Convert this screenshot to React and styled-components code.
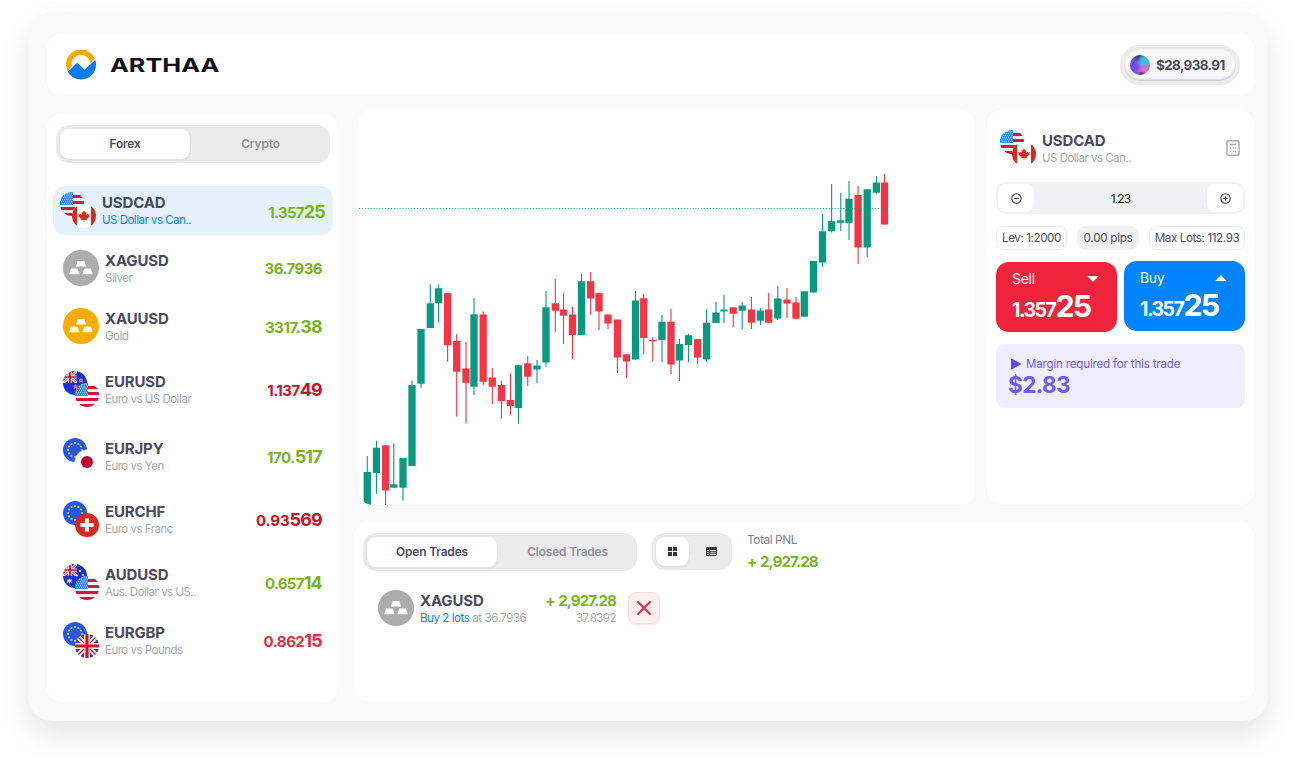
import React from "react";
import styled, { createGlobalStyle, css } from "styled-components";

const GlobalStyle = createGlobalStyle`
  *, *::before, *::after { box-sizing: border-box; }
  html, body { margin: 0; background: #fff; }
  body {
    font-family: Inter, "Liberation Sans", sans-serif;
    color: #4b4a5e;
    overflow: hidden;
  }
  button { font: inherit; color: inherit; border: 0; background: none; padding: 0; margin: 0; }
  svg { display: block; }
`;

const colors = {
  ink: "#4b4a5e",
  muted: "#a9a9ab",
  up: "#79b51c",
  down: "#cc1128",
  hot: "#ee2b43",
  blue: "#0b84f3",
  track: "#ebebeb",
};

/* ---------- layout ---------- */

const Page = styled.div`
  padding: 12px 28px 44px;
  width: 1296px;
  height: 765px;
`;

const Shell = styled.main`
  display: flex;
  flex-direction: column;
  width: 1240px;
  height: 709px;
  padding: 22px 14px 19px 19px;
  border-radius: 24px;
  background: #f9f9f9;
  box-shadow: 0 14px 30px rgba(0, 0, 0, 0.1);
`;

const Card = styled.section`
  background: #fff;
  border-radius: 15px;
`;

const Header = styled(Card).attrs({ as: "header" })`
  display: flex;
  align-items: center;
  justify-content: space-between;
  height: 61px;
  padding: 0 14px 0 19px;
`;

const Body = styled.div`
  display: flex;
  gap: 16px;
`;

const Sidebar = styled(Card).attrs({ as: "aside" })`
  width: 291px;
  height: 588px;
  margin-top: 19px;
  padding: 11px 5px 0 6px;
`;

const Main = styled.div`
  display: flex;
  flex-direction: column;
  gap: 17px;
  width: 900px;
  padding-top: 15px;
`;

const TopRow = styled.div`
  display: flex;
  gap: 12px;
  height: 395px;
  padding-left: 4px;
`;

const ChartCard = styled(Card)`
  width: 617px;
  overflow: hidden;
`;

const OrderCard = styled(Card)`
  width: 267px;
  padding: 20px 9px 0;
`;

const TradesCard = styled(Card)`
  height: 180px;
  padding: 11px 9px 0;
`;

/* ---------- header ---------- */

const Brand = styled.div`
  display: flex;
  align-items: center;
  gap: 14px;
`;

const LogoMark = styled.svg`
  width: 30px;
  height: 30px;
  margin-bottom: -1px;
  border-radius: 50%;
  transform: translateY(-0.5px);
`;

const Wordmark = styled.span`
  display: inline-block;
  font-size: 19.3px;
  line-height: 24px;
  font-weight: 700;
  color: #110e24;
  transform: scaleX(1.31);
  transform-origin: left center;
`;

const Balance = styled.div`
  display: flex;
  align-items: center;
  gap: 6px;
  width: 120px;
  height: 40px;
  padding-left: 6px;
  border: 4px solid ${colors.track};
  border-radius: 20px;
  background: #f8f8f8;
  box-shadow: inset 0 -2px 2px rgba(75, 74, 110, 0.2), inset 0 0 2px rgba(75, 74, 110, 0.12);
`;

const Orb = styled.span`
  width: 20px;
  height: 20px;
  border-radius: 50%;
  background:
    radial-gradient(circle at 60% 108%, #4a2340 0 10%, rgba(74, 35, 64, 0) 22%),
    radial-gradient(ellipse at 75% 78%, #e566d8 0 14%, rgba(229, 102, 216, 0) 38%),
    radial-gradient(circle at 74% 34%, #35c3e6 0 16%, rgba(53, 195, 230, 0) 42%),
    radial-gradient(circle at 42% 2%, #35406f 0 8%, rgba(53, 64, 111, 0) 28%),
    linear-gradient(100deg, #6b3fe6, #7d55da 50%, #4a70c8);
`;

const Amount = styled.span`
  font-size: 13.5px;
  font-weight: 700;
  letter-spacing: -0.65px;
`;

/* ---------- segmented control ---------- */

const Segments = styled.div`
  display: flex;
  width: 274px;
  height: 38px;
  margin-left: ${(p) => p.$inset || 0}px;
  padding: 4px;
  border-radius: 13px;
  background: ${colors.track};
`;

const raised = css`
  background: #fff;
  box-shadow: 0 1px 3px rgba(0, 0, 0, 0.08);
`;

const Segment = styled.button`
  flex: ${(p) => (p.$active ? "none" : 1)};
  width: 130px;
  height: 30px;
  padding-left: ${(p) => (p.$active ? 0 : 5)}px;
  border-radius: 9px;
  font-size: 11.8px;
  font-weight: 600;
  letter-spacing: -0.1px;
  color: ${(p) => (p.$active ? colors.ink : "#908f9a")};
  ${(p) => p.$active && raised}
`;

/* ---------- instruments ---------- */

const List = styled.ul`
  list-style: none;
  margin: 23px 0 0;
  padding: 0;
`;

const Row = styled.li`
  display: flex;
  align-items: center;
  height: 49px;
  margin-top: ${(p) => p.$gap}px;
  padding: ${(p) => (p.$active ? "0 8px 1px 7px" : "0 11px 1px 10px")};
  border-radius: 12px;
  background: ${(p) => (p.$active ? "#e5f1fe" : "transparent")};
`;

const Names = styled.div`
  flex: 1;
  padding: ${(p) => (p.$low ? 2 : 1)}px 0 0 6px;
  white-space: nowrap;
`;

const Symbol = styled.div`
  font-size: 15px;
  line-height: 18px;
  font-weight: 650;
  letter-spacing: -0.15px;
`;

const Caption = styled.div`
  font-size: 11.5px;
  line-height: 16px;
  letter-spacing: ${(p) => p.$tracking ?? -0.5}px;
  color: ${(p) => p.$color || colors.muted};
`;

const Price = styled.div`
  padding-top: ${(p) => p.$drop ?? 3}px;
  font-size: 15px;
  font-weight: 700;
  line-height: 22px;
  white-space: nowrap;
  letter-spacing: ${(p) => p.$tracking}px;
  color: ${(p) => p.$color};
  b { font-size: 18px; font-weight: 700; letter-spacing: -0.8px; }
`;

const PairBox = styled.div`
  display: grid;
  grid-template: 12px 12px 12px / 12px 12px 12px;
  width: 36px;
  height: 36px;
  flex: none;
`;

const FlagDisc = styled.svg`
  width: 24px;
  height: 24px;
  border-radius: 50%;
  grid-area: ${(p) => (p.$front ? "2 / 2 / 4 / 4" : "1 / 1 / 3 / 3")};
  ${(p) => p.$ring && css`box-shadow: 0 0 0 0.5px #eeeee4;`}
`;

const Union = () => (
  <>
    <path fill="#f4f4f4" d="M0 0h24v24H0z" />
    <path fill="#1d3fc4" d="M0 3.5V9h5.5zM3.5 0H9v5.5zM24 3.5V9h-5.5zM20.500 0H15v5.5zM0 20.500V15h5.500zM3.500 24H9v-5.500zM24 20.500V15h-5.500zM20.500 24H15v-5.500z" />
    <path stroke="#d80027" strokeWidth="1.3" d="M2 2l7 7M22 2l-7 7M2 22l7-7M22 22l-7-7" />
    <path fill="#ce1126" d="M10.400 0h3.200v10.400H24v3.200H13.600V24h-3.200V13.600H0v-3.200h10.400z" />
  </>
);

const flagArt = {
  us: (
    <>
      <path fill="#f6f3f5" d="M0 0h24v24H0z" />
      <path fill="#d8123f" d="M0 3h24v3H0zM0 9h24v3H0zM0 15h24v3H0zM0 21h24v3H0z" />
      <path fill="#3a8eec" d="M0 0h13v13H0z" />
      <path stroke="#9fcdfa" strokeWidth="0.9" strokeDasharray="1 1" d="M1 1.500h12M2 3.500h11M1 5.500h12M2 7.500h11M1 9.500h12M2 11.500h11" />
    </>
  ),
  ca: (
    <>
      <path fill="#fff" d="M0 0h24v24H0z" />
      <path fill="#d52b1e" d="M0 0h5v24H0zM19 0h5v24h-5z" />
      <path fill="#d52b1e" d="M12 6.200l1.200 2.300 1.300-.6-.5 3 1.500-1.300.4.9 1.700-.3-.7 1.800.8.500-3 2.600.2 1.100-2.600-.4V18h-.6v-2.200l-2.600.4.2-1.100-3-2.600.8-.500-.7-1.800 1.700.3.400-.9 1.500 1.300-.5-3 1.300.6z" />
    </>
  ),
  eu: (
    <>
      <path fill="#2358e8" d="M0 0h24v24H0z" />
      {Array.from({ length: 12 }, (_, i) => {
        const a = (i * Math.PI) / 6;
        return (
          <rect key={i} fill="#ffda1a" width="1.7" height="1.7"
            x={11.15 + 6.9 * Math.sin(a)} y={11.15 - 6.9 * Math.cos(a)} />
        );
      })}
    </>
  ),
  jp: (
    <>
      <path fill="#fff" d="M0 0h24v24H0z" />
      <circle fill="#bc002d" cx="12" cy="12" r="6" />
    </>
  ),
  ch: (
    <>
      <path fill="#d52b1e" d="M0 0h24v24H0z" />
      <path fill="#fff" d="M9.900 5.400h4.200v4.500h4.500v4.200h-4.500v4.500H9.900v-4.500H5.400V9.900h4.500z" />
    </>
  ),
  gb: <Union />,
  nz: (
    <>
      <path fill="#1a35cc" d="M0 0h24v24H0z" />
      <svg width="14" height="12" x="0" y="0" viewBox="0 0 24 24" preserveAspectRatio="none"><Union /></svg>
      <path fill="#e0406a" stroke="#f3c3d6" strokeWidth="0.5" d="M18 7.500l.6 1.400h1.500l-1.200 1 .5 1.500-1.400-.9-1.400.9.500-1.500-1.200-1h1.500zM12.500 13.500l.6 1.400h1.500l-1.200 1 .5 1.500-1.400-.9-1.400.9.500-1.500-1.200-1h1.500z" />
    </>
  ),
  au: (
    <>
      <path fill="#1a35cc" d="M0 0h24v24H0z" />
      <svg width="14" height="12" x="0" y="0" viewBox="0 0 24 24" preserveAspectRatio="none"><Union /></svg>
      <path fill="#fff" d="M6.500 14l.8 1.700 1.900-.3-1 1.500 1 1.600-1.900-.3-.8 1.700-.8-1.700-1.900.3 1-1.600-1-1.500 1.900.3z" />
      <circle fill="#fff" cx="17" cy="7" r="1" />
      <circle fill="#fff" cx="20" cy="11" r=".9" />
      <circle fill="#fff" cx="14" cy="11.500" r=".9" />
      <circle fill="#fff" cx="16.500" cy="16.500" r="1" />
    </>
  ),
};

const Pair = ({ back, front }) => (
  <PairBox>
    <FlagDisc viewBox="0 0 24 24">{flagArt[back]}</FlagDisc>
    <FlagDisc viewBox="0 0 24 24" $front $ring={front === "jp"}>{flagArt[front]}</FlagDisc>
  </PairBox>
);

const MetalDisc = styled.svg`
  width: 36px;
  height: 36px;
  flex: none;
  border-radius: 50%;
  background: ${(p) => p.$color};
`;

const Metal = ({ color }) => (
  <MetalDisc viewBox="0 0 36 36" $color={color}>
    <path fill="#fff" d="M14.700 11h6.600l1.800 5.500H12.900zM8 18.400h6.500l2 5.800H6.100zM21.300 18.400h6.500l2.200 5.800H19.400z" />
  </MetalDisc>
);

const instruments = [
  { sym: "USDCAD", name: "US Dollar vs Can..", icon: ["us", "ca"], lo: "1.357", hi: "25", color: colors.up, gap: 0, active: true, tracking: -0.75, drop: 4 },
  { sym: "XAGUSD", name: "Silver", icon: "#acacac", lo: "36.7936", hi: "", color: colors.up, gap: 9, tracking: -0.55, drop: 2 },
  { sym: "XAUUSD", name: "Gold", icon: "#ffac04", lo: "3317.", hi: "38", color: colors.up, gap: 9, tracking: -0.5 },
  { sym: "EURUSD", name: "Euro vs US Dollar", icon: ["nz", "us"], lo: "1.137", hi: "49", color: colors.down, gap: 14, tracking: -0.5 },
  { sym: "EURJPY", name: "Euro vs Yen", icon: ["eu", "jp"], lo: "170.", hi: "517", color: colors.up, gap: 18, tracking: -0.5 },
  { sym: "EURCHF", name: "Euro vs Franc", icon: ["eu", "ch"], lo: "0.93", hi: "569", color: colors.down, gap: 14, tracking: -0.1 },
  { sym: "AUDUSD", name: "Aus. Dollar vs US..", icon: ["au", "us"], lo: "0.657", hi: "14", color: colors.up, gap: 14, tracking: -0.75 },
  { sym: "EURGBP", name: "Euro vs Pounds", icon: ["eu", "gb"], lo: "0.862", hi: "15", color: colors.hot, gap: 9, tracking: -0.5 },
];

const Instrument = ({ item }) => (
  <Row $gap={item.gap} $active={item.active}>
    {Array.isArray(item.icon)
      ? <Pair back={item.icon[0]} front={item.icon[1]} />
      : <Metal color={item.icon} />}
    <Names $low={item.active}>
      <Symbol>{item.sym}</Symbol>
      <Caption $color={item.active ? colors.blue : undefined}>{item.name}</Caption>
    </Names>
    <Price $color={item.color} $tracking={item.tracking} $drop={item.drop}>{item.lo}{item.hi && <b>{item.hi}</b>}</Price>
  </Row>
);

/* ---------- chart ---------- */

// [centre x, high, body top, body bottom, low, rising]
const candles = [
  [367.3, 456, 472, 506, 506, 1], [376.5, 440.7, 447.7, 473, 493.7, 1], [385.6, 445.3, 445.3, 490.5, 505, 0],
  [393.8, 443.3, 484.3, 487.700, 487.700, 1], [403, 458, 458, 487.700, 500.7, 1], [412, 380.3, 385, 466, 466, 1],
  [421, 329, 329, 383.7, 388, 1], [430.3, 284.3, 303.3, 328, 328, 1], [438.6, 284.3, 288.2, 303.3, 322.7, 1],
  [447.6, 293.2, 293.2, 345.3, 361.7, 0], [456.7, 334, 341, 371.700, 416.5, 0], [466, 342, 368.3, 382.700, 423.7, 0],
  [474, 298, 314.3, 386.700, 395, 1], [483.2, 311.5, 314.5, 381.700, 385, 0], [492.3, 368, 377.5, 386.700, 404, 0],
  [501.4, 380.5, 385, 401, 418.7, 0], [510.5, 373.3, 400, 406, 414.7, 0], [518.5, 365.3, 365.3, 408, 423.7, 1],
  [527.7, 356.2, 363.3, 376.700, 386, 0], [537, 360, 365.5, 369.5, 383, 1], [546, 291, 307.3, 362.5, 366.7, 1],
  [555.3, 279, 303.3, 310.700, 332, 0], [563.5, 293, 309.5, 315.700, 344, 0], [572.5, 307, 314.5, 335, 359, 0],
  [581.5, 274, 281.2, 335, 335, 1], [590.7, 272, 281.2, 298.5, 315, 0], [599, 293.2, 293.2, 311.5, 330, 0],
  [608, 314.5, 314.5, 323.5, 329, 0], [617.4, 319.5, 319.5, 357.5, 373, 0], [626.5, 354.3, 354.3, 361.5, 378, 0],
  [635.5, 291, 300.5, 359.5, 359.5, 1], [643.7, 294, 298.3, 338, 354, 0], [652.8, 337, 340, 341.2, 361, 0],
  [662, 315, 321.7, 340, 362, 1], [671, 309, 321.7, 364.5, 374, 0], [679.4, 339, 344, 360.5, 381, 1],
  [688.5, 334, 335.2, 345, 362, 1], [697.6, 339.2, 339.2, 357.5, 364, 0], [706.6, 309, 322.7, 359.5, 362, 1],
  [716, 302, 312.5, 323, 323, 1], [724, 295, 309.5, 311.5, 323, 1], [733.2, 307.3, 307.3, 313.7, 327, 0],
  [742.2, 302, 305.5, 310.7, 329.5, 1], [751.4, 297, 309.5, 322.7, 329, 0], [760.5, 308, 310.5, 320.7, 325, 1],
  [768.7, 293, 309.5, 322.7, 322.7, 0], [777.8, 286, 298.5, 318.5, 320, 1], [787, 288, 299.5, 303.5, 318, 0],
  [796, 297, 302.5, 318.7, 318.7, 0], [804.3, 291.3, 291.3, 316.7, 316.7, 1], [813.5, 261, 261, 292.5, 292.5, 1],
  [822.5, 214, 231.3, 262.5, 267, 1], [831.6, 184, 221.2, 231.2, 232.7, 1], [840.8, 193, 220.4, 222.8, 231, 1],
  [849, 181, 198.7, 222.8, 240, 1], [858.1, 186, 195, 247.5, 264, 0], [867.2, 189.3, 189.3, 247.5, 257, 1],
  [876.4, 176, 182.5, 192.7, 194, 1], [884.5, 174, 182.5, 224.5, 224.5, 0],
];

const Chart = () => (
  <svg width="617" height="395" viewBox="358 110 617 395">
    {candles.map(([x, high, top, bottom, low, rising]) => (
      <g key={x} fill={rising ? "#089981" : "#f23645"}>
        <rect x={x - 0.55} y={high} width="1.1" height={low - high} />
        <rect x={x - 3.65} y={top} width="7.3" height={bottom - top} />
      </g>
    ))}
    <path stroke="#089981" strokeDasharray="1 1.9" d="M359 208.500H888" />
  </svg>
);

/* ---------- order ticket ---------- */

const TicketHead = styled.div`
  display: flex;
  align-items: center;
  height: 36px;
  padding: 0 5px 0 4px;
`;

const Stepper = styled.div`
  display: flex;
  align-items: center;
  justify-content: space-between;
  height: 32px;
  margin-top: 16px;
  padding: 2px;
  border-radius: 10px;
  background: #f1f1f4;
  font-size: 12px;
  letter-spacing: -0.9px;
  color: #111;
`;

const StepButton = styled.button`
  display: grid;
  place-items: center;
  width: 36px;
  height: 28px;
  border-radius: 8px;
  background: #fff;
`;

const Chips = styled.div`
  display: flex;
  justify-content: space-between;
  margin-top: 12px;
`;

const Chip = styled.span`
  display: flex;
  align-items: center;
  justify-content: center;
  width: ${(p) => p.$width}px;
  height: 24px;
  border: 1px solid ${(p) => (p.$filled ? "#f1f1f4" : "#ececef")};
  border-radius: 8px;
  background: ${(p) => (p.$filled ? "#f1f1f4" : "#fff")};
  font-size: 11.7px;
  letter-spacing: ${(p) => p.$tracking}px;
  white-space: nowrap;
`;

const Sides = styled.div`
  display: flex;
  justify-content: space-between;
  align-items: flex-start;
  margin-top: 11px;
`;

const SideButton = styled.button`
  display: flex;
  flex-direction: column;
  align-items: stretch;
  width: 121px;
  height: 70px;
  margin-top: ${(p) => (p.$sell ? 1 : 0)}px;
  padding: 8px 18px 0 16px;
  border-radius: 13px;
  background: ${(p) => (p.$sell ? "#f0233c" : "#0083ff")};
  color: #fff;
  text-align: left;
`;

const SideTop = styled.span`
  display: flex;
  align-items: center;
  justify-content: space-between;
  font-size: 14px;
  line-height: 18px;
  letter-spacing: -0.3px;
`;

const SidePrice = styled.span`
  display: block;
  font-size: 19.5px;
  line-height: 35px;
  font-weight: 700;
  letter-spacing: -1.5px;
  white-space: nowrap;
  b { font-size: 30.5px; font-weight: 700; letter-spacing: -1.8px; }
`;

const Margin = styled.div`
  height: 64px;
  margin-top: 12px;
  padding: 12px 0 0 12px;
  border-radius: 9px;
  background: #f0edfe;
  color: #7259fb;
`;

const MarginLabel = styled.div`
  display: flex;
  align-items: center;
  gap: 5px;
  padding-left: 3px;
  font-size: 11.5px;
  line-height: 16px;
  letter-spacing: -0.15px;
`;

const MarginValue = styled.div`
  font-size: 22.5px;
  line-height: 26px;
  font-weight: 700;
  letter-spacing: -0.6px;
`;

const StepIcon = ({ plus }) => (
  <svg width="11" height="11" viewBox="0 0 11 11" fill="none" stroke="#3a3a3c" strokeWidth="1.1">
    <circle cx="5.500" cy="5.500" r="4.700" />
    <path d={plus ? "M3.200 5.500h4.600M5.500 3.200v4.600" : "M3.200 5.500h4.600"} />
  </svg>
);

const Calculator = () => (
  <svg width="14" height="16" viewBox="0 0 14 16" fill="none" stroke="#acacac" strokeWidth="1.5">
    <rect x="1" y=".8" width="12" height="14.400" rx="1" />
    <path d="M3.800 4.300h6.400" />
    <path strokeDasharray="1.500 1.100" d="M3.900 8h6.400M3.900 11.400h6.400" />
  </svg>
);

/* ---------- trades ---------- */

const TradesBar = styled.div`
  display: flex;
  align-items: flex-start;
  gap: 15px;
  height: 38px;
`;

const ViewToggle = styled.div`
  display: flex;
  width: 80px;
  height: 37px;
  padding: 4px;
  border-radius: 12px;
  background: ${colors.track};
`;

const ViewButton = styled.button`
  display: grid;
  place-items: center;
  flex: ${(p) => (p.$active ? "none" : 1)};
  width: 33px;
  height: 29px;
  padding-left: ${(p) => (p.$active ? 0 : 6)}px;
  border-radius: 9px;
  ${(p) => p.$active && raised}
`;

const Totals = styled.div`
  margin-top: -1px;
  font-size: 12px;
  line-height: 16px;
  letter-spacing: -0.5px;
  color: #85848f;
`;

const Gain = styled.div`
  font-size: 15.2px;
  line-height: ${(p) => p.$line || 18}px;
  font-weight: 700;
  letter-spacing: -0.95px;
  word-spacing: 1px;
  color: ${colors.up};
`;

const Trade = styled.div`
  display: flex;
  align-items: center;
  width: 282px;
  height: 36px;
  margin: 19px 0 0 15px;
`;

const TradeResult = styled.div`
  margin-right: 12px;
  padding-top: 1px;
  text-align: right;
`;

const Lots = styled.span`
  color: ${colors.blue};
`;

const CloseButton = styled.button`
  display: grid;
  place-items: center;
  width: 32px;
  height: 32px;
  border: 1px solid #fcdcdf;
  border-radius: 8px;
  background: #feeff0;
  box-shadow: 0 1px 2px rgba(240, 35, 60, 0.12);
`;

export default function App() {
  return (
    <>
      <GlobalStyle />
      <Page>
        <Shell>
          <Header>
            <Brand>
              <LogoMark viewBox="0 0 30 30">
                <path fill="#ffa800" d="M0 0h30v30H0z" />
                <circle fill="#fff" cx="15" cy="15" r="9.700" />
                <path fill="#007cf5" stroke="#fff" strokeWidth="2.400" paintOrder="stroke" d="M-2 26L11.300 13.200L18.600 20.200L32 8V32H-2z" />
              </LogoMark>
              <Wordmark>ARTHAA</Wordmark>
            </Brand>
            <Balance>
              <Orb />
              <Amount>$28,938.91</Amount>
            </Balance>
          </Header>

          <Body>
            <Sidebar>
              <Segments $inset={3}>
                <Segment $active>Forex</Segment>
                <Segment>Crypto</Segment>
              </Segments>
              <List>
                {instruments.map((item) => <Instrument key={item.sym} item={item} />)}
              </List>
            </Sidebar>

            <Main>
              <TopRow>
                <ChartCard><Chart /></ChartCard>
                <OrderCard>
                  <TicketHead>
                    <Pair back="us" front="ca" />
                    <Names>
                      <Symbol>USDCAD</Symbol>
                      <Caption>US Dollar vs Can..</Caption>
                    </Names>
                    <Calculator />
                  </TicketHead>
                  <Stepper>
                    <StepButton aria-label="Less"><StepIcon /></StepButton>
                    1.23
                    <StepButton aria-label="More"><StepIcon plus /></StepButton>
                  </Stepper>
                  <Chips>
                    <Chip $width={71} $tracking={-0.45}>Lev: 1:2000</Chip>
                    <Chip $width={62} $tracking={-0.3} $filled>0.00 pips</Chip>
                    <Chip $width={96} $tracking={-0.42}>Max Lots: 112.93</Chip>
                  </Chips>
                  <Sides>
                    <SideButton $sell>
                      <SideTop>
                        Sell
                        <svg width="12" height="6" viewBox="0 0 12 6"><path fill="#fff" d="M.3 0h11.400L6 6z" /></svg>
                      </SideTop>
                      <SidePrice>1.357<b>25</b></SidePrice>
                    </SideButton>
                    <SideButton>
                      <SideTop>
                        Buy
                        <svg width="12" height="6" viewBox="0 0 12 6"><path fill="#fff" d="M.3 6h11.400L6 0z" /></svg>
                      </SideTop>
                      <SidePrice>1.357<b>25</b></SidePrice>
                    </SideButton>
                  </Sides>
                  <Margin>
                    <MarginLabel>
                      <svg width="10" height="12" viewBox="0 0 10 12"><path fill="#6246fa" stroke="#6246fa" strokeLinejoin="round" d="M.5 1l9 5-9 5z" /></svg>
                      Margin required for this trade
                    </MarginLabel>
                    <MarginValue>$2.83</MarginValue>
                  </Margin>
                </OrderCard>
              </TopRow>

              <TradesCard>
                <TradesBar>
                  <Segments>
                    <Segment $active>Open Trades</Segment>
                    <Segment>Closed Trades</Segment>
                  </Segments>
                  <ViewToggle>
                    <ViewButton $active aria-label="Grid">
                      <svg width="9" height="9" viewBox="0 0 9 9"><path fill="#333" d="M0 0h4v4H0zM5 0h4v4H5zM0 5h4v4H0zM5 5h4v4H5z" /></svg>
                    </ViewButton>
                    <ViewButton aria-label="Table">
                      <svg width="11" height="9" viewBox="0 0 11 9">
                        <rect width="11" height="9" rx="1" fill="#333" />
                        <path fill="#ddd" d="M1 3h2v1.200H1zM1 5.200h2v1H1zM1 7.100h2V8H1zM4 3h6v1.200H4zM4 5.200h6v1H4zM4 7.100h6V8H4z" />
                      </svg>
                    </ViewButton>
                  </ViewToggle>
                  <Totals>
                    Total PNL
                    <Gain $line={28}>+ 2,927.28</Gain>
                  </Totals>
                </TradesBar>
                <Trade>
                  <Metal color="#acacac" />
                  <Names>
                    <Symbol>XAGUSD</Symbol>
                    <Caption $tracking={-0.42}><Lots>Buy 2 lots</Lots> at 36.7936</Caption>
                  </Names>
                  <TradeResult>
                    <Gain>+ 2,927.28</Gain>
                    <Caption>37.8392</Caption>
                  </TradeResult>
                  <CloseButton aria-label="Close trade">
                    <svg width="14" height="14" viewBox="0 0 14 14"><path stroke="#f0233c" strokeWidth="1.800" strokeLinecap="round" d="M1 1l12 12M13 1L1 13" /></svg>
                  </CloseButton>
                </Trade>
              </TradesCard>
            </Main>
          </Body>
        </Shell>
      </Page>
    </>
  );
}
